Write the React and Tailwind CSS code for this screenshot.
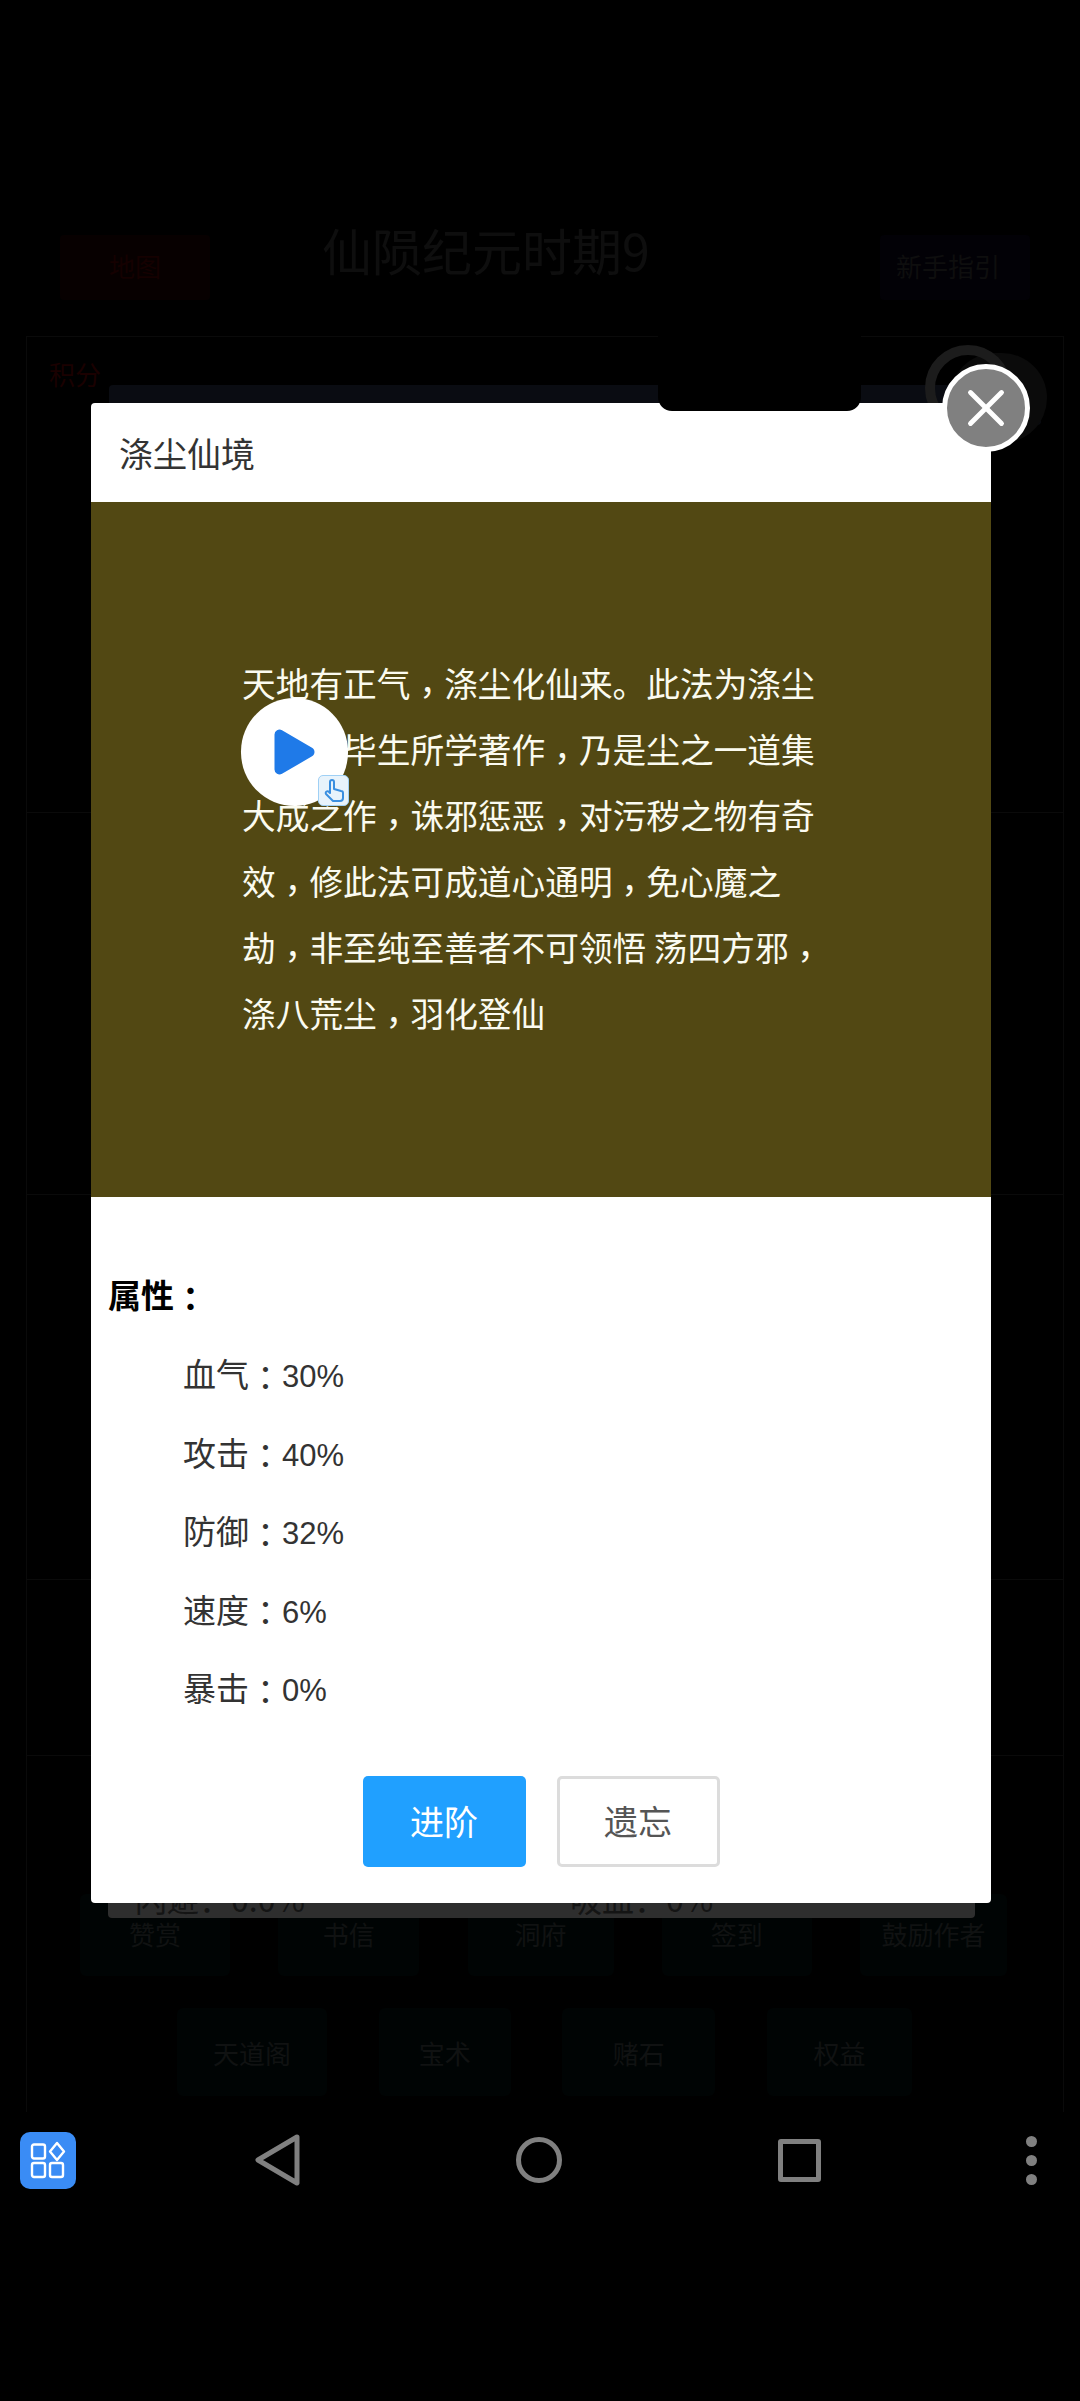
import { Play, X } from 'lucide-react';

const cjk = "font-['Noto_Sans_CJK_SC','Noto_Sans',sans-serif]";

const desc = '天地有正气，涤尘化仙来。此法为涤尘仙尊的毕生所学著作，乃是尘之一道集大成之作，诛邪惩恶，对污秽之物有奇效，修此法可成道心通明，免心魔之劫，非至纯至善者不可领悟 荡四方邪，涤八荒尘，羽化登仙';

const attrs = [
  ['血气', '30%'],
  ['攻击', '40%'],
  ['防御', '32%'],
  ['速度', '6%'],
  ['暴击', '0%'],
];

// commas and colons sit in the middle of the cell in the reference, and low
function Punct({ text }) {
  return text.split(/([，：])/).map((part, i) => {
    if (part === '，') return <span key={i} className="relative top-[0.24em] font-['Noto_Sans_CJK_TC',sans-serif]">{part}</span>;
    if (part === '：') return <span key={i} className="relative top-[0.08em] font-['Noto_Sans_CJK_TC',sans-serif]">{part}</span>;
    return part;
  });
}

function DimButton({ label, className }) {
  return (
    <div className={`flex items-center justify-center rounded-md bg-[#000404] text-[#101212] ${className}`}>
      {label}
    </div>
  );
}

function BackgroundPage() {
  return (
    <div className="h-[2112px] shrink-0 flex flex-col">
      <div className="h-[235px] shrink-0" />
      <div className="flex h-[65px] shrink-0 items-center pl-[60px] pr-[50px]">
        <div className="flex h-[65px] w-[150px] items-center justify-center rounded bg-[#070000] pb-[4px] text-[26px] text-[#150000]">地图</div>
        <div className="ml-[112px] flex-1 pb-[36px] text-[50px] text-[#0e0e0e]">仙陨纪元时期9</div>
        <div className="flex h-[65px] w-[150px] items-center justify-center rounded bg-[#020106] pb-[4px] pr-[14px] text-[26px] text-[#0e0e0e]">新手指引</div>
      </div>
      <div className="ml-[26px] mr-[16px] mt-[36px] flex flex-1 flex-col border border-b-0 border-[#0a0a0a]">
        <div className="h-[476px] shrink-0 border-b border-[#0a0a0a] px-[22px] pt-[24px]">
          <div className="flex items-start gap-2">
            <span className="w-[52px] text-[26px] leading-[26px] text-[#1a0000]">积分</span>
            <div className="mt-[24px] h-[40px] flex-1 rounded bg-[#0a0c12]" />
          </div>
        </div>
        <div className="h-[382px] shrink-0 border-b border-[#0a0a0a]" />
        <div className="h-[385px] shrink-0 border-b border-[#0a0a0a]" />
        <div className="h-[176px] shrink-0 border-b border-[#0a0a0a]" />
        <div className="flex flex-1 flex-col pt-[122px]">
          <div className="relative ml-[81px] flex h-[40px] w-[867px] rounded-b bg-[#2e2e2e] pl-[27px] text-[32px] leading-[40px] text-[#141414]">
            <span className="w-[435px]">闪避：0.0%</span>
            <span>吸血：0%</span>
          </div>
          <div className="ml-[53px] mt-[-24px] flex w-[927px] justify-between text-[26px]">
            <DimButton label="赞赏" className="h-[82px] w-[150px] pb-[4px]" />
            <DimButton label="书信" className="h-[82px] w-[141px] pb-[4px]" />
            <DimButton label="洞府" className="h-[82px] w-[146px] pb-[4px]" />
            <DimButton label="签到" className="h-[82px] w-[150px] pb-[4px]" />
            <DimButton label="鼓励作者" className="h-[82px] w-[147px] pb-[4px]" />
          </div>
          <div className="ml-[150px] mt-[32px] flex w-[735px] justify-between text-[26px]">
            <DimButton label="天道阁" className="h-[88px] w-[150px]" />
            <DimButton label="宝术" className="h-[88px] w-[132px]" />
            <DimButton label="赌石" className="h-[88px] w-[153px]" />
            <DimButton label="权益" className="h-[88px] w-[145px]" />
          </div>
        </div>
      </div>
    </div>
  );
}

function NavBar() {
  return (
    <div className="flex h-[96px] shrink-0 items-center pl-[20px] pr-[43px]">
      <div className="flex h-[57px] w-[56px] items-center justify-center rounded-[10px] bg-[#3a8cf5]">
        <svg width="38" height="38" viewBox="0 0 38 38" fill="none" stroke="#fff" strokeWidth="2.4" strokeLinejoin="round">
          <rect x="3" y="3.5" width="13" height="14" rx="2" />
          <path d="M28 2 L35 10.5 L28 19 L21 10.5 Z" />
          <rect x="3" y="22" width="13" height="14" rx="2" />
          <rect x="21" y="22" width="13" height="14" rx="2" />
        </svg>
      </div>
      <svg width="48" height="52" viewBox="0 0 48 52" fill="none" stroke="#808080" strokeWidth="5" strokeLinejoin="round" className="ml-[178px]">
        <path d="M43 3 L4 26 L43 49 Z" />
      </svg>
      <div className="ml-[214px] h-[46px] w-[46px] rounded-full border-[5px] border-[#808080]" />
      <div className="ml-[216px] h-[43px] w-[43px] rounded-[3px] border-[5px] border-[#808080]" />
      <div className="ml-auto flex flex-col gap-[8px]">
        <div className="h-[11px] w-[11px] rounded-full bg-[#808080]" />
        <div className="h-[11px] w-[11px] rounded-full bg-[#808080]" />
        <div className="h-[11px] w-[11px] rounded-full bg-[#808080]" />
      </div>
    </div>
  );
}

function Modal() {
  return (
    <div className="absolute left-[91px] top-[403px] flex h-[1500px] w-[900px] flex-col overflow-hidden rounded bg-white">
      <div className="flex h-[99px] shrink-0 items-center pl-[28px] text-[34px] text-[#333]">涤尘仙境</div>
      <div className="h-[695px] shrink-0 bg-[#524813] pl-[151px] pt-[148px]">
        <p className="w-[590px] text-[33.7px] leading-[66px] text-[#fbfbf0]"><Punct text={desc} /></p>
      </div>
      <div className="flex-1 pl-[17px] pt-[73px]">
        <div className="h-[48px] text-[33px] leading-[48px] font-bold text-black"><Punct text="属性：" /></div>
        <div className="mt-[31px] flex flex-col gap-[30.6px] pl-[75px] text-[33px] leading-[48px] text-[#333]">
          {attrs.map(([name, value]) => (
            <div key={name} className="h-[48px]">
              {name}<Punct text="：" />
              <span className="font-['Liberation_Sans',sans-serif] text-[31px]">{value}</span>
            </div>
          ))}
        </div>
        <div className="mt-[65px] flex justify-center gap-[31px] pr-[17px] text-[34px]">
          <button className="h-[91px] w-[163px] rounded-[5px] bg-[#20a0ff] pb-[3px] text-white">进阶</button>
          <button className="h-[91px] w-[163px] rounded-[5px] border-[3px] border-[#dcdcdc] bg-white pb-[3px] text-[#555]">遗忘</button>
        </div>
      </div>
    </div>
  );
}

export default function App() {
  return (
    <div className={`relative flex h-[2401px] w-[1080px] flex-col overflow-hidden bg-black ${cjk}`}>
      <BackgroundPage />
      <NavBar />

      {/* ghost of the close button behind the real one */}
      <div className="absolute left-[950px] top-[353px] h-[90px] w-[97px] rounded-full bg-[#0b0b0b]" />
      <div className="absolute left-[925px] top-[345px] h-[86px] w-[86px] rounded-full border-[10px] border-[#1c1c1c]" />

      <Modal />

      {/* camera cutout photographed over the page */}
      <div className="absolute left-[658px] top-[105px] h-[306px] w-[203px] rounded-[14px] bg-black" />

      <div className="absolute left-[942px] top-[364px] flex h-[88px] w-[88px] items-center justify-center rounded-full border-[5px] border-white bg-[#808080]">
        <X size={62} strokeWidth={1.9} color="#fff" />
      </div>

      {/* floating play button */}
      <div className="absolute left-[241px] top-[698px] flex h-[108px] w-[107px] items-center justify-center rounded-full bg-white">
        <Play size={60} fill="#1f7ae8" strokeWidth={0} className="-translate-x-[3px]" />
      </div>
      <div className="absolute left-[318px] top-[775px] flex h-[31px] w-[31px] items-center justify-center rounded-[5px] border border-[#9fd0f5] bg-[#e8f3fb]">
        <svg width="22" height="24" viewBox="0 0 22 24" fill="none" stroke="#3a8fe0" strokeWidth="2" strokeLinejoin="round">
          <path d="M7 3 a2 2 0 0 1 4 0 V10 L18 12 a2 2 0 0 1 2 2 V19 a3 3 0 0 1 -3 3 H10 L3 15 a1.5 1.5 0 0 1 3 -2 L7 14 Z" />
        </svg>
      </div>
    </div>
  );
}
